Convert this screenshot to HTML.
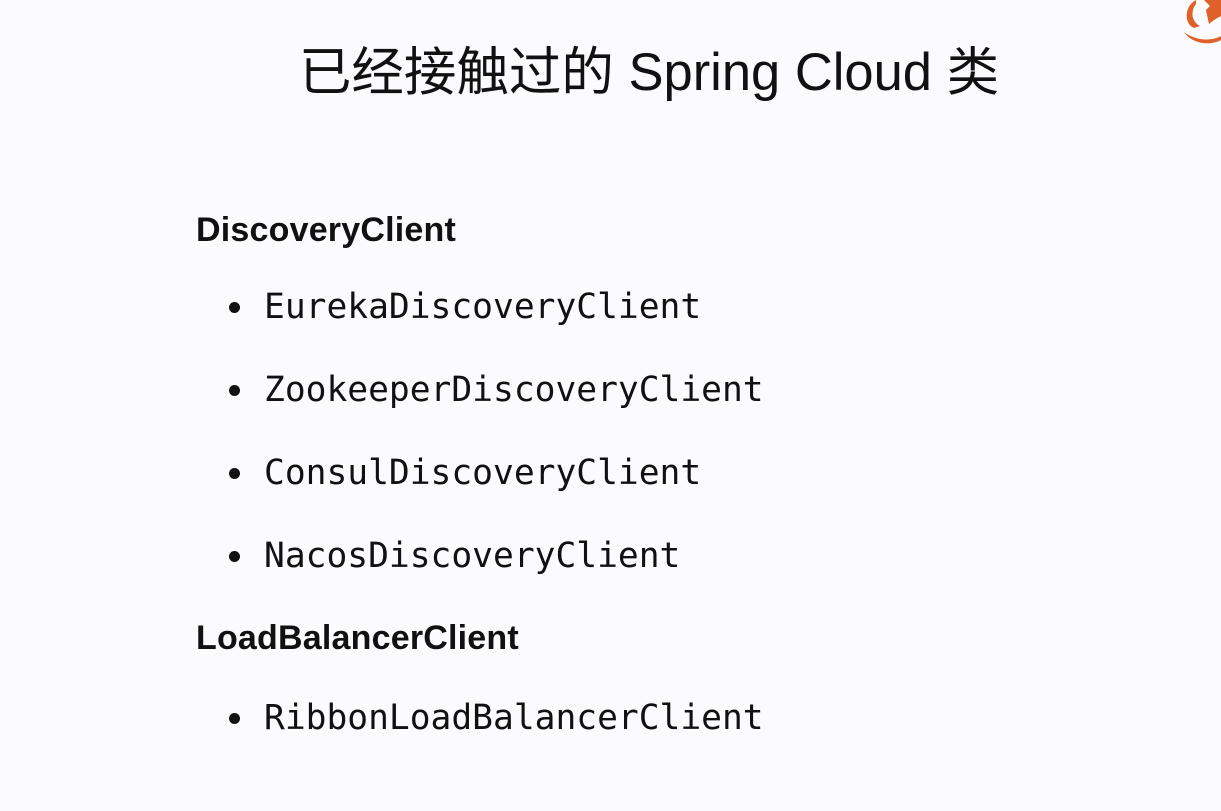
<!DOCTYPE html>
<html><head><meta charset="utf-8"><style>
body{margin:0;width:1221px;height:811px;background:#fbfafc;position:relative;overflow:hidden;color:#111;}
.t{position:absolute;left:0;width:1298px;text-align:center;top:30px;font:52.5px "Liberation Sans","Noto Sans CJK SC",sans-serif;white-space:nowrap}
.h{position:absolute;left:196px;font:bold 34px "Liberation Sans",sans-serif;letter-spacing:0.2px}
.i{position:absolute;left:264px;font:34.6px "DejaVu Sans Mono",monospace;}
.b{position:absolute;left:229px;width:11px;height:11px;border-radius:50%;background:#111}
</style></head><body>
<div class="t">已经接触过的 Spring Cloud 类</div>
<svg style="position:absolute;left:1180px;top:0" width="41" height="45" viewBox="0 0 41 45">
<path d="M16 0 C4 6 4 24 14 28 L20 26 C12 22 10 12 16 4 Z" fill="#e0602a"/>
<path d="M24 0 L30 6 L26 10 L29 24 L34 20 L41 16 L41 0 Z" fill="#e0602a"/>
<path d="M4 32 C14 40 30 42 41 36 L41 40 C30 46 12 44 4 32 Z" fill="#e0602a"/>
</svg>
<div class="h" style="top:211px">DiscoveryClient</div>
<div class="b" style="top:302px"></div><div class="i" style="top:287px">EurekaDiscoveryClient</div>
<div class="b" style="top:385px"></div><div class="i" style="top:370px">ZookeeperDiscoveryClient</div>
<div class="b" style="top:468px"></div><div class="i" style="top:453px">ConsulDiscoveryClient</div>
<div class="b" style="top:551px"></div><div class="i" style="top:536px">NacosDiscoveryClient</div>
<div class="h" style="top:619px">LoadBalancerClient</div>
<div class="b" style="top:713px"></div><div class="i" style="top:698px">RibbonLoadBalancerClient</div>
</body></html>
